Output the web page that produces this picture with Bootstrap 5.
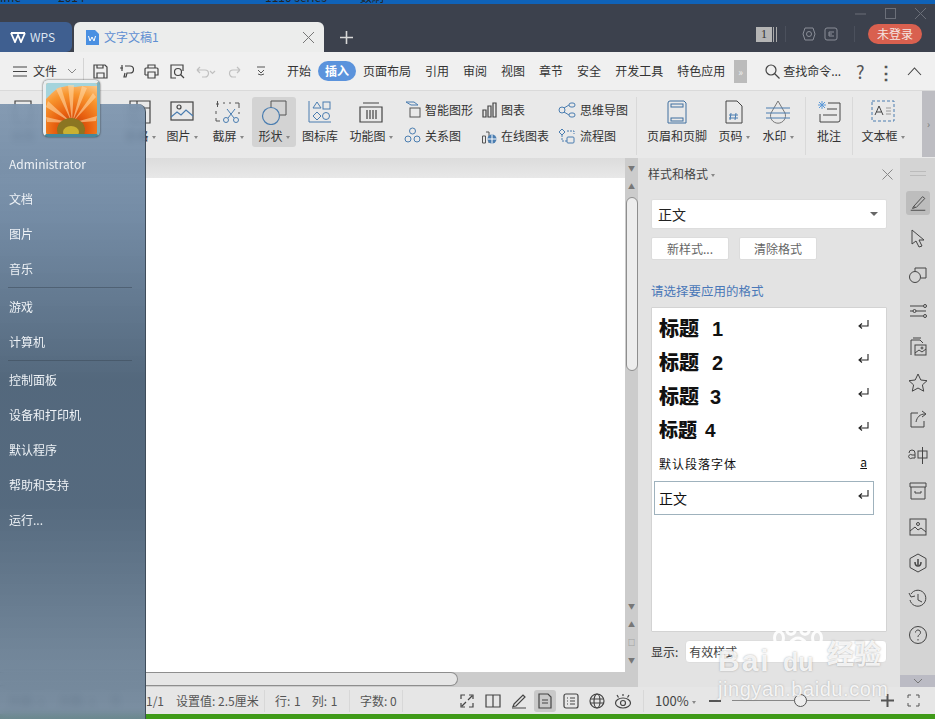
<!DOCTYPE html>
<html lang="zh">
<head>
<meta charset="utf-8">
<title>WPS</title>
<link rel="stylesheet" href="https://cdn.jsdelivr.net/npm/bootstrap@5.3.0/dist/css/bootstrap.min.css">
<style>
html,body{height:100%;overflow:hidden}
body{font-family:"Noto Sans CJK SC","Liberation Sans",sans-serif;font-size:12px;color:#333;background:#e6e6e6;width:935px;height:719px;position:relative}
svg{display:block;flex:none}
.ic{fill:none;stroke:#444;stroke-width:1.2}
.topstrip{height:4px;background:#0f62b8;overflow:hidden;color:#222;line-height:12px}
.topstrip div{margin-top:-9px}
.ts1{width:58px}.ts2{width:207px}.ts3{width:95px}
.titlebar{height:48px;background:#3c414d;padding-top:18px}
.wpstab{width:72px;height:30px;background:#3f5f90;border-radius:0 6px 6px 0;color:#dde5f0;padding-left:10px;gap:4px}
.doctab{width:250px;height:30px;background:#ecedec;border-radius:6px 6px 0 0;margin-left:2px;padding:0 9px 0 11px;color:#5f8fd2;gap:5px}
.plus{margin-left:16px;color:#d8d8d8}
.winbtns{top:7px;right:8px;gap:17px}
.titleright{margin-left:auto;padding-right:13px;padding-bottom:6px}
.numbox{width:16px;height:15px;background:#b5b5b5;color:#333;font-family:"Liberation Serif",serif;text-align:center;line-height:15px;margin-right:1px}
.numbars{width:4px;height:15px;border-left:1px solid #aaa;border-right:1px solid #aaa;margin-right:8px}
.tsep{width:1px;height:16px;background:#4b505c}
.loginbtn{width:54px;height:20px;border-radius:10px;background:#d9604f;color:#f5e4e0;line-height:20px;text-align:center;font-size:12px;border:0;padding:0;margin-left:13px}
.menubar{height:39px;background:#f0f0f0;border-bottom:1px solid #dadada}
.fileblock{width:84px;height:26px;padding-left:13px;gap:6px;border-right:1px solid #d4d4d4;flex:none}
.qbar{gap:10.5px;padding-left:9px;width:196px;flex:none}
.menubar .nav-link{padding:0 7px;height:20px;line-height:20px;color:#333;font-size:12px;border-radius:10px}
.menubar .nav-pills .nav-link.active{background:#5b93dc;color:#fff;font-weight:700}
.morebox{width:13px;height:23px;background:#bbb;color:#eee;text-align:center;line-height:23px;font-size:10px;margin-left:2px}
.search{margin-left:18px;gap:3px;width:82px}
.helpq{width:26px;text-align:center;font-size:18px;color:#555;line-height:20px}
.ribbon{height:67px;background:#e9e9e9;padding-top:6px}
.rb{height:50px;flex:none;display:flex;flex-direction:column;align-items:center;justify-content:space-between;border-radius:3px;padding:3px 0 2px;white-space:nowrap;color:#333}
.rb.on{background:#d3d3d3}
.cr::after{content:"";display:inline-block;border:2.5px solid transparent;border-top:3px solid #888;border-bottom:0;margin-left:3px;vertical-align:middle}
.r1{width:30px;margin-left:8px}.r2{width:36px;margin-left:84px}.r3{width:36px;margin-left:6px}
.r4{width:40px;margin-left:8px}.r5{width:44px;margin-left:4px}.r6{width:40px;margin-left:4px}
.r7{width:48px;margin-left:7px}.r8{width:70px;margin-left:9px}.r9{width:70px;margin-left:8px}.r10{width:72px;margin-left:6px}
.r11{width:62px;margin-left:9px}.r12{width:34px;margin-left:9px}.r13{width:34px;margin-left:10px}
.r14{width:28px;margin-left:18px}.r15{width:46px;margin-left:15px}
.rsep{width:1px;height:58px;background:#d9d9d9;flex:none;margin-left:6px}
.rsep2{margin-left:10px;margin-right:-9px}
.rsep3{margin-left:9px;margin-right:-8px}
.stk{flex:none;height:50px;display:flex;flex-direction:column;gap:9px;padding-top:4px}
.stk>div{display:flex;align-items:center;gap:4px;white-space:nowrap;height:17px}
.rscroll{position:absolute;top:91px;right:0;width:13px;height:66px;background:#bdbdc2;color:#777;text-align:center;line-height:66px;font-size:10px}
.mainrow{height:529px}
.docarea{width:625px;flex:none;background:#fff}
.docshadow{height:20px;background:linear-gradient(#dcdcdc,#e8e8e8)}
.hscroll{height:15px;background:#ccc;margin-top:auto}
.hthumb{width:458px;height:14px;background:#e6e6e6;border:1px solid #8e8e8e;border-left:0;border-radius:0 7px 7px 0}
.vscroll{width:13px;flex:none;background:#ccc;color:#777;font-size:7px;text-align:center;padding-top:5px}
.vb{display:block;height:10px;line-height:10px}
.vb2{margin-top:8px}
.vthumb{width:12px;height:174px;flex:none;background:#ededed;border:1px solid #8e8e8e;border-radius:6px;margin:6px 0 0}
.vbtns{margin-top:auto;gap:8px;padding-bottom:22px;align-items:center}
.panel{width:262px;flex:none;background:#e3e3e3;padding:8px 13px 0}
.phead{height:16px;margin:0 0 17px -3px;color:#444}
.pclose{margin-left:auto;margin-right:-6px}
.pselect{height:30px;background:#fff;border:1px solid #ddd;border-radius:2px;font-size:14px;padding:0 6px;color:#222;margin-bottom:8px}
.caretd{margin-left:auto;border:4px solid transparent;border-top:4px solid #666;border-bottom:0;margin-right:2px}
.pbtns{gap:10px;margin-bottom:23px}
.pbtns .btn{width:78px;height:23px;padding:0;font-size:12px;background:#fff;border:1px solid #dcdcdc;border-radius:2px;color:#666}
.plabel{color:#4a78b8;height:16px;line-height:16px;margin-bottom:8px;font-size:12.5px}
.stylebox{height:325px;background:#fff;border:1px solid #d3d3d3;border-radius:1px;padding-top:3px}
.stylebox .list-group-item{height:34px;border:1px solid transparent;margin:0 12px 0 2px;padding:0 4px;display:flex;align-items:center;justify-content:space-between;background:transparent;color:#111;border-radius:0}
.stylebox .list-group-item.sel{border:1px solid #9fb2bd}
.ent{margin:0 0 6px;}
.h1t{font-size:20px;font-weight:900}
.h1t b{margin-left:13px;font-family:"Liberation Sans",sans-serif}
.h2t{font-size:20px;font-weight:900}
.h2t b{margin-left:11px;font-family:"Liberation Sans",sans-serif}
.h4t{font-size:19px;font-weight:900}
.h4t b{margin-left:8px;font-family:"Liberation Sans",sans-serif}
.dft{letter-spacing:1px;font-size:12px}
.ua{margin-right:2px;margin-bottom:4px}
.bodyt{font-size:14px}
.showrow{height:23px;margin-top:8px;gap:7px;color:#333}
.showsel{flex:1;height:23px;background:#fff;border:1px solid #ddd;border-radius:4px;padding:0 3px;color:#444}
.sidebar{width:35px;flex:none;background:#d4d4d4;padding-top:13px;align-items:center}
.sideline{width:16px;height:5px;border-top:1px solid #bbb;border-bottom:1px solid #bbb;margin-bottom:9px}
.sic{height:36px;width:25px;display:flex;align-items:center;justify-content:center}
.sic svg{width:22px;height:22px}
.sic.on svg{background:#bdbdbd;border-radius:3px;width:24px;height:24px;padding:2px}
.sidelow{margin-top:auto;height:12px;width:100%;background:#bbbbc4;color:#888}
.statusbar{height:27px;background:#e6e6e6;padding-left:146px;color:#555}
.st{white-space:nowrap;height:22px;line-height:22px;border-right:1px solid #d8d8d8;flex:none}
.s1{width:30px;border:0}.s2{width:89px}.s3{padding:0 10px 0 10px;width:85px;word-spacing:1px}.s4{padding-left:10px;width:53px}
.colgap{margin-left:11px}
.ghostst{position:absolute;left:8px;gap:14px;color:#555}
.statusicons{gap:4px;margin-left:auto;width:188px;flex:none;border-right:1px solid #d8d8d8}
.sti{width:22px;height:22px;display:flex;align-items:center;justify-content:center;border-radius:3px;flex:none}
.sti.on{background:#c9c9c9}
.zoomtxt{margin-left:11px;width:48px;font-size:13px;color:#444;flex:none}
.zminus{width:12px;height:2px;background:#555;margin:0 11px 0 6px;flex:none}
.slider{width:138px;height:1px;background:#888;position:relative;flex:none}
.knob{position:absolute;left:62px;top:-6px;width:13px;height:13px;border-radius:50%;background:#eee;border:1px solid #555}
.zplus{margin-left:11px}
.zfull{margin:0 15px 0 13px}
.greenbar{height:5px;background:#3f9a18}
.startmenu{position:absolute;left:0;top:104px;width:146px;height:615px;border-right:1px solid #3f4d5b;border-top-right-radius:8px;background:linear-gradient(rgba(118,143,170,.88),rgba(108,133,160,.94) 18%,rgba(80,101,122,.98) 45%,rgba(82,103,124,.98) 65%,rgba(112,134,155,.9) 100%);backdrop-filter:blur(3px);padding-top:42px;z-index:3}
.startmenu .list-group-item{background:transparent;border:0;color:#eef2f6;padding:0 0 0 9px;height:35px;line-height:35px;font-size:12px;border-radius:0}
.startsep{height:1px;background:rgba(60,75,90,.55);margin:1px 13px 1px 8px}
.avatar{position:absolute;left:43px;top:80px;width:57px;height:57px;border-radius:5px;border:3px solid #e9eef0;border-bottom-color:#46889c;border-right-color:#7fb0bd;box-shadow:0 0 2px #333;z-index:4;overflow:hidden;background:#f80}
.bd{position:absolute;left:712px;top:612px;width:180px;height:104px;z-index:5;pointer-events:none}
.bdl,.bdc,.bdd{position:absolute;font-weight:700;color:rgba(255,255,255,.85);text-shadow:0 0 2px rgba(130,130,130,.7)}
.bdl{left:6px;top:26px;font-family:"Liberation Sans",sans-serif;font-size:30px;letter-spacing:2px}
.bdd{left:71px;top:32px;font-family:"Liberation Sans",sans-serif;font-size:25px}
.bdc{left:115px;top:21px;font-size:27px;font-family:"Noto Sans CJK SC",sans-serif}
.bdu{position:absolute;left:6px;top:62px;font-family:"Liberation Sans",sans-serif;font-size:20px;letter-spacing:.55px;color:rgba(255,255,255,.85);text-shadow:0 0 2px rgba(130,130,130,.6)}
.bdp{position:absolute;left:61px;top:6px}
</style>
</head>
<body>
<div class="topstrip"><div class="d-flex"><span class="ts1">ime</span><span class="ts2">2014</span><span class="ts3">1110 series</span><span>数刷</span></div></div>

<div class="titlebar d-flex align-items-start">
  <div class="wpstab d-flex align-items-center">
    <svg width="16" height="12" viewBox="0 0 16 12"><path d="M1 2l4 9 3-7 3 7 4-9M1 2h14" fill="none" stroke="#fff" stroke-width="1.8"/></svg><span>WPS</span>
  </div>
  <div class="doctab d-flex align-items-center">
    <svg width="14" height="15" viewBox="0 0 14 15"><path d="M1 0h9l4 4v11H1z" fill="#4a90e2"/><path d="M3.500 6l1.500 5 2-4 2 4 1.500-5" fill="none" stroke="#fff" stroke-width="1"/></svg>
    <span>文字文稿1</span>
    <svg class="ms-auto" width="13" height="13" viewBox="0 0 13 13"><path d="M1 1l11 11M12 1L1 12" stroke="#777" fill="none"/></svg>
  </div>
  <svg class="plus align-self-center" width="13" height="13" viewBox="0 0 13 13"><path d="M6.500 0v13M0 6.500h13" stroke="#d8d8d8" stroke-width="1.600"/></svg>
  <div class="titleright d-flex align-items-center h-100">
    <div class="numbox">1</div><div class="numbars"></div><div class="tsep"></div>
    <svg class="ms-3" width="14" height="14" viewBox="0 0 14 14"><path d="M3 1h8l2 6-2 6H3L1 7z" fill="none" stroke="#8a8e98"/><circle cx="7" cy="7" r="2.500" fill="none" stroke="#8a8e98"/></svg>
    <svg class="ms-2" width="14" height="14" viewBox="0 0 14 14"><rect x="1" y="1" width="12" height="12" rx="2" fill="none" stroke="#8a8e98"/><path d="M10 5H5v4h5M5 7h3" fill="none" stroke="#8a8e98"/></svg>
    <div class="tsep ms-3"></div>
    <button class="loginbtn" type="button">未登录</button>
  </div>
</div>
<div class="winbtns position-absolute d-flex align-items-center">
  <svg width="13" height="13" viewBox="0 0 13 13"><path d="M1 7h11" stroke="#6b6f79"/></svg>
  <svg width="13" height="13" viewBox="0 0 13 13"><rect x="1.500" y="1.500" width="10" height="10" fill="none" stroke="#6b6f79"/></svg>
  <svg width="13" height="13" viewBox="0 0 13 13"><path d="M1 1l11 11M12 1L1 12" stroke="#6b6f79"/></svg>
</div>

<div class="menubar d-flex align-items-center">
  <div class="fileblock d-flex align-items-center">
    <svg width="14" height="11" viewBox="0 0 14 11"><path d="M0 1h14M0 5.500h14M0 10h14" stroke="#444"/></svg>
    <span>文件</span>
    <svg class="ms-1" width="10" height="6" viewBox="0 0 10 6"><path d="M1 1l4 4 4-4" fill="none" stroke="#888"/></svg>
  </div>
  <div class="qbar d-flex align-items-center">
    <svg class="ic" width="15" height="15" viewBox="0 0 15 15"><path d="M1 1h11l2 2v11H1zM4 14V9h7v5M4 1v3h6V1"/></svg>
    <svg class="ic" width="15" height="15" viewBox="0 0 15 15"><path d="M1 4h3M3 1v6M6 2h5a3 3 0 010 7H8l-1 4H5l1-4"/></svg>
    <svg class="ic" width="15" height="15" viewBox="0 0 15 15"><path d="M4 4V1h7v3M1 11V5a1 1 0 011-1h11a1 1 0 011 1v6h-3M4 11H1M4 8h7v6H4z"/></svg>
    <svg class="ic" width="15" height="15" viewBox="0 0 15 15"><path d="M6 14H1V1h12v6"/><circle cx="8" cy="8" r="3.500"/><path d="M10.500 10.500l3.500 3.500"/></svg>
    <svg width="22" height="13" viewBox="0 0 22 13"><path d="M2 5h8a3.500 3.500 0 010 7H7M2 5l3-3M2 5l3 3M15 6l2.500 2.500L20 6" fill="none" stroke="#c0c0c0" stroke-width="1.200"/></svg>
    <svg width="14" height="13" viewBox="0 0 14 13"><path d="M12 5H5a3.500 3.500 0 000 7h3M12 5L9 2M12 5L9 8" fill="none" stroke="#c0c0c0" stroke-width="1.200"/></svg>
    <svg class="ms-1" width="10" height="10" viewBox="0 0 10 10"><path d="M1 1h8M2 4l3 3 3-3M2 8l3 1 3-1" fill="none" stroke="#555"/></svg>
  </div>
  <ul class="nav nav-pills flex-nowrap">
    <li class="nav-item"><a class="nav-link" href="#">开始</a></li>
    <li class="nav-item"><a class="nav-link active" href="#">插入</a></li>
    <li class="nav-item"><a class="nav-link" href="#">页面布局</a></li>
    <li class="nav-item"><a class="nav-link" href="#">引用</a></li>
    <li class="nav-item"><a class="nav-link" href="#">审阅</a></li>
    <li class="nav-item"><a class="nav-link" href="#">视图</a></li>
    <li class="nav-item"><a class="nav-link" href="#">章节</a></li>
    <li class="nav-item"><a class="nav-link" href="#">安全</a></li>
    <li class="nav-item"><a class="nav-link" href="#">开发工具</a></li>
    <li class="nav-item"><a class="nav-link" href="#">特色应用</a></li>
  </ul>
  <div class="morebox">»</div>
  <div class="search d-flex align-items-center">
    <svg width="15" height="15" viewBox="0 0 15 15"><circle cx="6" cy="6" r="5" fill="none" stroke="#444" stroke-width="1.200"/><path d="M9.500 9.500l5 5" stroke="#444" stroke-width="1.200"/></svg>
    <span class="text-nowrap">查找命令...</span>
  </div>
  <span class="helpq">?</span>
  <span class="helpq fw-bold">⋮</span>
  <svg class="ms-2" width="15" height="9" viewBox="0 0 15 9"><path d="M1 8l6.500-7L14 8" fill="none" stroke="#444" stroke-width="1.100"/></svg>
</div>

<div class="ribbon d-flex">
  <div class="rb r1"><svg class="ic" width="20" height="24" viewBox="0 0 20 24"><path d="M2 1h16v22H2z"/></svg><span>分页</span></div>
  <div class="rb r2"><svg class="ic" width="22" height="24" viewBox="0 0 22 24"><path d="M1 1h20v22H1zM1 8h20M8 1v22"/></svg><span class="cr">表格</span></div>
  <div class="rb r3"><svg class="ic" width="24" height="22" viewBox="0 0 24 22"><rect x="1" y="2" width="22" height="18"/><circle cx="9" cy="7" r="2"/><path d="M1 17l6-5 4 3 5-5 7 6" stroke="#4a7db0"/></svg><span class="cr">图片</span></div>
  <div class="rb r4"><svg width="26" height="24" viewBox="0 0 26 24" fill="none"><path d="M1 4h3M2.500 1v6M8 3h2M14 3h2M20 3h4v5M1 11v3M1 18v3h4M24 12v2" stroke="#555"/><circle cx="11" cy="20" r="2.500" stroke="#4a7db0"/><circle cx="21" cy="20" r="2.500" stroke="#4a7db0"/><path d="M13 18l7-9M19 18l-7-9" stroke="#4a7db0"/></svg><span class="cr">截屏</span></div>
  <div class="rb r5 on"><svg width="26" height="25" viewBox="0 0 26 25" fill="none"><path d="M10 1h15v14h-7" stroke="#555"/><path d="M10 1v7" stroke="#555"/><circle cx="10" cy="16" r="8.500" stroke="#4a7db0" stroke-width="1.200"/></svg><span class="cr">形状</span></div>
  <div class="rb r6"><svg width="24" height="24" viewBox="0 0 24 24" fill="none" stroke="#4a7db0"><path d="M1 1v21h22"/><path d="M9 2l4 6H5z"/><rect x="15" y="2" width="7" height="7"/><path d="M9 12l4 4-4 4-4-4z"/><circle cx="18" cy="16" r="3.500"/></svg><span>图标库</span></div>
  <div class="rb r7"><svg class="ic" width="24" height="24" viewBox="0 0 24 24"><path d="M4 3h16M1 7h22v15H1zM8 10v9M11 10v9M14 10v9M17 10v9"/></svg><span class="cr">功能图</span></div>
  <div class="stk r8">
    <div><svg width="17" height="17" viewBox="0 0 17 17" fill="none"><path d="M2 1h8l4 3H7z" stroke="#4a7db0"/><rect x="6" y="7" width="10" height="9" stroke="#555"/></svg><span>智能图形</span></div>
    <div><svg width="17" height="17" viewBox="0 0 17 17" fill="none" stroke="#4a7db0"><circle cx="8.500" cy="4" r="3"/><circle cx="4" cy="12" r="3"/><circle cx="13" cy="12" r="3"/></svg><span>关系图</span></div>
  </div>
  <div class="stk r9">
    <div><svg class="ic" width="15" height="16" viewBox="0 0 15 16"><path d="M1 8h3v7H1zM6 4h3v11H6zM11 1h3v14h-3z"/></svg><span>图表</span></div>
    <div><svg width="15" height="16" viewBox="0 0 15 16" fill="none"><path d="M0.500 8h3v7h-3zM4 4h3v11" stroke="#555"/><circle cx="10" cy="11" r="4.500" fill="#4a7db0"/><path d="M5.500 11h9M10 6.500v9" stroke="#fff"/></svg><span>在线图表</span></div>
  </div>
  <div class="stk r10">
    <div><svg width="18" height="16" viewBox="0 0 18 16" fill="none" stroke="#4a7db0"><circle cx="4" cy="8" r="3"/><rect x="11" y="1" width="6" height="4" rx="2"/><rect x="11" y="11" width="6" height="4" rx="2"/><path d="M6 6l5-3M6 10l5 3"/></svg><span>思维导图</span></div>
    <div><svg width="18" height="16" viewBox="0 0 18 16" fill="none" stroke="#4a7db0"><path d="M1 4l3-3 3 3-3 3z"/><rect x="9" y="9" width="7" height="6" rx="1"/><path d="M4 7v6h5M9 3h7v3" stroke-dasharray="2 1"/></svg><span>流程图</span></div>
  </div>
  <div class="rsep"></div>
  <div class="rb r11"><svg width="20" height="24" viewBox="0 0 20 24" fill="none" stroke="#3f6f9f"><path d="M1 3a2 2 0 012-2h14l2 2v20H1z"/><rect x="4" y="4" width="12" height="3"/><rect x="4" y="18" width="12" height="3"/></svg><span>页眉和页脚</span></div>
  <div class="rb r12"><svg width="20" height="24" viewBox="0 0 20 24" fill="none"><path d="M2 1h11l5 5v17H2z" stroke="#444"/><path d="M7 13l-1 7M12 13l-1 7M5 15h9M5 18h9" stroke="#4a7db0"/></svg><span class="cr">页码</span></div>
  <div class="rb r13"><svg width="24" height="24" viewBox="0 0 24 24" fill="none" stroke="#4a7db0"><path d="M12 1l7 12a7.500 7.500 0 11-14 0z" stroke="#777"/><path d="M0 8h24M0 13h24M0 18h24"/></svg><span class="cr">水印</span></div>
  <div class="rsep rsep2"></div>
  <div class="rb r14"><svg width="24" height="24" viewBox="0 0 24 24" fill="none"><path d="M11 3h12v17a2 2 0 01-2 2H3v-8M10 9h10M6 15h14" stroke="#444"/><path d="M5 1v8M1 5h8M2 2l6 6M8 2L2 8" stroke="#5a98d8"/></svg><span>批注</span></div>
  <div class="rsep rsep3"></div>
  <div class="rb r15"><svg width="24" height="22" viewBox="0 0 24 22" fill="none"><rect x="1" y="1" width="22" height="20" stroke="#4a7db0" stroke-dasharray="3 2"/><path d="M4 15l4-9 4 9M5.500 12h5" stroke="#444"/><path d="M15 8h5M15 11h5M15 14h5" stroke="#999"/></svg><span class="cr">文本框</span></div>
</div>
<div class="rscroll">›</div>

<div class="mainrow d-flex">
  <div class="docarea d-flex flex-column">
    <div class="docshadow"></div>
    <div class="hscroll"><div class="hthumb"></div></div>
  </div>
  <div class="vscroll d-flex flex-column align-items-center">
    <span class="vb">▼</span><span class="vb vb2">▲</span>
    <div class="vthumb"></div>
    <div class="vbtns d-flex flex-column"><span class="vb">▼</span><span class="vb">▲</span><span class="vb">□</span><span class="vb">▼</span></div>
  </div>
  <div class="panel">
    <div class="phead d-flex align-items-center"><span class="cr">样式和格式</span>
      <svg class="pclose" width="11" height="11" viewBox="0 0 11 11"><path d="M.5.5l10 10M10.500.5l-10 10" stroke="#888"/></svg></div>
    <div class="pselect d-flex align-items-center"><span>正文</span><span class="caretd"></span></div>
    <div class="pbtns d-flex"><button class="btn" type="button">新样式...</button><button class="btn" type="button">清除格式</button></div>
    <div class="plabel">请选择要应用的格式</div>
    <div class="stylebox list-group">
      <div class="list-group-item"><span class="h1t">标题<b>1</b></span><svg class="ent" width="11" height="10" viewBox="0 0 11 10"><path d="M10 0v6H2M4 3.500L1 6l3 2.500" fill="none" stroke="#222" stroke-width="1.100"/></svg></div>
      <div class="list-group-item"><span class="h1t">标题<b>2</b></span><svg class="ent" width="11" height="10" viewBox="0 0 11 10"><path d="M10 0v6H2M4 3.500L1 6l3 2.500" fill="none" stroke="#222" stroke-width="1.100"/></svg></div>
      <div class="list-group-item"><span class="h2t">标题<b>3</b></span><svg class="ent" width="11" height="10" viewBox="0 0 11 10"><path d="M10 0v6H2M4 3.500L1 6l3 2.500" fill="none" stroke="#222" stroke-width="1.100"/></svg></div>
      <div class="list-group-item"><span class="h4t">标题<b>4</b></span><svg class="ent" width="11" height="10" viewBox="0 0 11 10"><path d="M10 0v6H2M4 3.500L1 6l3 2.500" fill="none" stroke="#222" stroke-width="1.100"/></svg></div>
      <div class="list-group-item"><span class="dft">默认段落字体</span><span class="text-decoration-underline ua">a</span></div>
      <div class="list-group-item sel"><span class="bodyt">正文</span><svg class="ent" width="11" height="10" viewBox="0 0 11 10"><path d="M10 0v6H2M4 3.500L1 6l3 2.500" fill="none" stroke="#222" stroke-width="1.100"/></svg></div>
    </div>
    <div class="showrow d-flex align-items-center"><span>显示:</span><div class="showsel d-flex align-items-center"><span>有效样式</span></div></div>
  </div>
  <div class="sidebar d-flex flex-column">
    <div class="sideline"></div>
    <div class="sic on"><svg viewBox="0 0 22 22" fill="none" stroke="#444"><path d="M6 15L16 4l2.500 2L9 16zM6 15l-1 2 3-1M3 19h16"/></svg></div>
    <div class="sic"><svg viewBox="0 0 22 22" fill="none" stroke="#444"><path d="M5 2l12 10h-5l3 6-3 1-3-6-4 3z"/></svg></div>
    <div class="sic"><svg viewBox="0 0 22 22" fill="none" stroke="#444"><path d="M8 4h11v10h-5"/><path d="M8 4v3"/><circle cx="8" cy="13" r="5.500"/></svg></div>
    <div class="sic"><svg viewBox="0 0 22 22" fill="none" stroke="#444"><path d="M3 6h13M3 11h3M9 11h10M3 16h13"/><circle cx="18" cy="6" r="1.500"/><circle cx="7.500" cy="11" r="1.500"/><circle cx="18" cy="16" r="1.500"/></svg></div>
    <div class="sic"><svg viewBox="0 0 22 22" fill="none" stroke="#444"><path d="M4 19V4h9l3 3M6 2h8"/><rect x="8" y="9" width="11" height="10"/><circle cx="15" cy="12" r="1"/><path d="M8 17l4-3 3 2 4-3"/></svg></div>
    <div class="sic"><svg viewBox="0 0 22 22" fill="none" stroke="#444"><path d="M11 2l2.800 6 6.200.7-4.600 4.200 1.300 6.300L11 16l-5.700 3.200 1.300-6.300L2 8.700 8.200 8z"/></svg></div>
    <div class="sic"><svg viewBox="0 0 22 22" fill="none" stroke="#444"><path d="M11 5H4v14h13v-6M9 14c1-5 4-8 9-8M15 3l4 3-4 3"/></svg></div>
    <div class="sic"><svg viewBox="0 0 22 22" fill="none" stroke="#444"><rect x="11" y="7" width="9" height="7"/><path d="M15.500 3v17M2 9a3 3 0 016 0v5M8 11H5a2 2 0 100 3h3"/></svg></div>
    <div class="sic"><svg viewBox="0 0 22 22" fill="none" stroke="#444"><path d="M3 3h16v4H3zM4 7v12h14V7M8 11v2h6v-2"/></svg></div>
    <div class="sic"><svg viewBox="0 0 22 22" fill="none" stroke="#444"><rect x="3" y="3" width="16" height="16"/><circle cx="11" cy="8" r="1.500"/><path d="M3 15l5-4 3 3 3-2 5 4"/></svg></div>
    <div class="sic"><svg viewBox="0 0 22 22" fill="none" stroke="#444"><path d="M11 2l8 4.500v9L11 20l-8-4.500v-9z"/><path d="M11 7v6M8 10c0 3 1 4 3 4s3-1 3-4" stroke-width="1.500"/></svg></div>
    <div class="sic"><svg viewBox="0 0 22 22" fill="none" stroke="#444"><path d="M4 6a8 8 0 11-1 6M2 5l2 4 4-1M11 6v6l4 2"/></svg></div>
    <div class="sic"><svg viewBox="0 0 22 22" fill="none" stroke="#444"><circle cx="11" cy="11" r="8.500"/><path d="M8.500 8.500a2.500 2.500 0 114 2c-1 .8-1.500 1.200-1.500 2.500M11 15v1.500"/></svg></div>
    <div class="sidelow d-flex align-items-center justify-content-center"><svg width="10" height="6" viewBox="0 0 10 6"><path d="M1 1l4 4 4-4" fill="none" stroke="#777"/></svg></div>
  </div>
</div>

<div class="statusbar d-flex align-items-center">
  <div class="ghostst d-flex"><span>页面: 1</span><span>页数: 1</span><span>节</span></div>
  <span class="st s1">1/1</span><span class="st s2">设置值: 2.5厘米</span><span class="st s3">行: 1<span class="colgap">列: 1</span></span><span class="st s4">字数: 0</span>
  <div class="statusicons d-flex align-items-center">
    <span class="sti"><svg class="ic" width="16" height="16" viewBox="0 0 16 16"><path d="M2 6V2h4M10 2h4v4M14 10v4h-4M6 14H2v-4M3 13l4-4M13 3L9 7"/></svg></span>
    <span class="sti"><svg class="ic" width="16" height="16" viewBox="0 0 16 16"><path d="M1 2h14v12H1zM8 2v12"/></svg></span>
    <span class="sti"><svg class="ic" width="16" height="16" viewBox="0 0 16 16"><path d="M3 11L12 2l2 2-9 9-3 .5zM1 15h14"/></svg></span>
    <span class="sti on"><svg class="ic" width="16" height="16" viewBox="0 0 16 16"><path d="M2 1h9l3 3v11H2zM5 7h6M5 10h6"/></svg></span>
    <span class="sti"><svg class="ic" width="16" height="16" viewBox="0 0 16 16"><rect x="1" y="1" width="14" height="14" rx="2"/><path d="M4 5h1M7 5h5M4 8h1M7 8h5M4 11h1M7 11h5"/></svg></span>
    <span class="sti"><svg class="ic" width="16" height="16" viewBox="0 0 16 16"><circle cx="8" cy="8" r="7"/><ellipse cx="8" cy="8" rx="3" ry="7"/><path d="M1 6h14M1 10h14"/></svg></span>
    <span class="sti"><svg class="ic" width="18" height="16" viewBox="0 0 18 16"><ellipse cx="9" cy="10" rx="7.500" ry="5"/><circle cx="9" cy="10" r="2.500"/><path d="M9 1v2M3 2l1.500 2.500M15 2l-1.500 2.500"/></svg></span>
  </div>
  <span class="zoomtxt cr">100%</span>
  <div class="zminus"></div>
  <div class="slider"><div class="knob"></div></div>
  <svg class="zplus" width="13" height="13" viewBox="0 0 13 13"><path d="M6.500 0v13M0 6.500h13" stroke="#555" stroke-width="2"/></svg>
  <svg class="zfull" width="13" height="13" viewBox="0 0 13 13"><path d="M1 4V1h3M9 1h3v3M12 9v3H9M4 12H1V9" fill="none" stroke="#555"/></svg>
</div>
<div class="greenbar"></div>

<div class="startmenu">
  <div class="list-group list-group-flush">
    <div class="list-group-item">Administrator</div>
    <div class="list-group-item">文档</div>
    <div class="list-group-item">图片</div>
    <div class="list-group-item">音乐</div>
    <div class="startsep"></div>
    <div class="list-group-item">游戏</div>
    <div class="list-group-item">计算机</div>
    <div class="startsep"></div>
    <div class="list-group-item">控制面板</div>
    <div class="list-group-item">设备和打印机</div>
    <div class="list-group-item">默认程序</div>
    <div class="list-group-item">帮助和支持</div>
    <div class="list-group-item">运行...</div>
  </div>
</div>
<div class="avatar">
  <svg width="51" height="51" viewBox="0 0 51 51">
    <defs>
      <radialGradient id="fl" gradientUnits="userSpaceOnUse" cx="26" cy="46" r="50">
        <stop offset="0" stop-color="#b8340a"/><stop offset=".35" stop-color="#e8600f"/><stop offset=".7" stop-color="#f8952e"/><stop offset="1" stop-color="#fdc98a"/>
      </radialGradient>
      <filter id="soft"><feGaussianBlur stdDeviation=".7"/></filter>
    </defs>
    <rect width="51" height="51" fill="url(#fl)"/>
    <path d="M0 0h51v3H36l-7 1-8-1-9 2-6 5-6 6z" fill="#a4d4dc"/>
    <g filter="url(#soft)" fill="#ffd7a4" opacity=".6">
      <path d="M26 40L10 6l5-2zM26 40L22 2h6zM26 40L36 3l5 2zM26 40L47 10l3 4zM26 40L2 18l-2 6zM26 40L0 34l1 5zM26 40l25-7-1 5z"/>
    </g>
    <ellipse cx="25" cy="47" rx="14" ry="12" fill="#8b7420" filter="url(#soft)"/>
    <ellipse cx="25" cy="49" rx="8" ry="6" fill="#c9b132" filter="url(#soft)"/>
  </svg>
</div>

<div class="bd">
  <svg class="bdp" width="50" height="44" viewBox="0 0 50 44" fill="none" stroke="rgba(255,255,255,.9)" stroke-width="3">
    <ellipse cx="18" cy="9" rx="5" ry="7.500"/><ellipse cx="32" cy="9" rx="5" ry="7.500"/><ellipse cx="6" cy="20" rx="4.500" ry="6.500"/><ellipse cx="44" cy="20" rx="4.500" ry="6.500"/>
    <path d="M25 20c-7 0-8 7-13 10-4 3-2 10 5 9 4-1 12-1 16 0 7 1 9-6 5-9-5-3-6-10-13-10z"/>
  </svg>
  <span class="bdl">Bai</span>
  <span class="bdd">du</span>
  <span class="bdc">经验</span>
  <span class="bdu">jingyan.baidu.com</span>
</div>
<script src="https://cdn.jsdelivr.net/npm/bootstrap@5.3.0/dist/js/bootstrap.bundle.min.js"></script>
</body>
</html>
